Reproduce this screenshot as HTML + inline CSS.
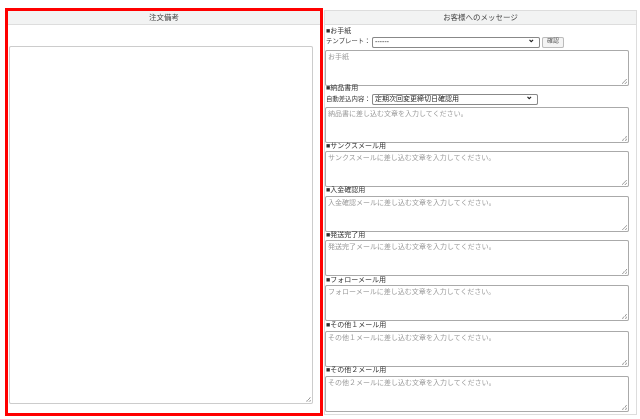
<!DOCTYPE html><html><head><meta charset="utf-8"><style>
body{margin:0;width:640px;height:419px;background:#fff;position:relative;overflow:hidden;font-family:"Liberation Sans","Noto Sans CJK JP",sans-serif;font-size:7px;color:#333}
.a{position:absolute;box-sizing:border-box;white-space:nowrap}
.hd{background:#f2f3f3;border-bottom:1px solid #ddd;text-align:center;color:#444;line-height:14px;font-size:7.5px}
.ta{border:1px solid #aaa;border-radius:2px;background:#fff;color:#999;padding:2px 2px;line-height:10px}
.lb{line-height:10px;color:#333}
.sel{border:1px solid #888;border-radius:2px;background:#fff;line-height:9px;padding-left:2px;color:#222}
.sel:after{content:"⌄";position:absolute;right:4px;top:-3px;font-size:9px;font-weight:bold}
.grip{position:absolute;right:1px;bottom:1px;width:5px;height:5px;background:linear-gradient(135deg,transparent 45%,#999 45%,#999 55%,transparent 55%,transparent 75%,#999 75%,#999 85%,transparent 85%)}
</style></head><body>
<div class="a" style="left:5px;top:8px;width:318px;height:408px;border:3px solid #f00"></div>
<div class="a hd" style="left:8px;top:11px;width:312px;height:14px">注文備考</div>
<div class="a ta" style="left:9px;top:46px;width:304px;height:358px;border-color:#ccc"><span class="grip"></span></div>

<div class="a" style="left:324px;top:10px;width:313px;height:405px;border:1px solid #ddd"></div>
<div class="a hd" style="left:325px;top:11px;width:311px;height:14px">お客様へのメッセージ</div>
<div class="a lb" style="left:326px;top:27px">■お手紙</div>
<div class="a lb" style="left:326px;top:37px;font-size:6.4px">テンプレート：</div>
<div class="a sel" style="left:372px;top:37px;width:168px;height:11px">------</div>
<div class="a" style="left:542px;top:37px;width:22px;height:11px;border:1px solid #bbb;border-radius:2px;background:#f4f4f4;font-size:6px;text-align:center;line-height:9px;color:#555">確認</div>
<div class="a ta" style="left:325px;top:50px;width:304px;height:36px">お手紙<span class="grip"></span></div>

<div class="a lb" style="left:326px;top:84px">■納品書用</div>
<div class="a lb" style="left:326px;top:95px;font-size:6.4px">自動差込内容：</div>
<div class="a sel" style="left:372px;top:94px;width:166px;height:11px">定期次回変更締切日確認用</div>
<div class="a ta" style="left:325px;top:107px;width:304px;height:36px">納品書に差し込む文章を入力してください。<span class="grip"></span></div>

<div class="a lb" style="left:326px;top:142px">■サンクスメール用</div>
<div class="a ta" style="left:325px;top:151px;width:304px;height:36px">サンクスメールに差し込む文章を入力してください。<span class="grip"></span></div>
<div class="a lb" style="left:326px;top:186px">■入金確認用</div>
<div class="a ta" style="left:325px;top:196px;width:304px;height:36px">入金確認メールに差し込む文章を入力してください。<span class="grip"></span></div>
<div class="a lb" style="left:326px;top:231px">■発送完了用</div>
<div class="a ta" style="left:325px;top:240px;width:304px;height:36px">発送完了メールに差し込む文章を入力してください。<span class="grip"></span></div>
<div class="a lb" style="left:326px;top:276px">■フォローメール用</div>
<div class="a ta" style="left:325px;top:285px;width:304px;height:36px">フォローメールに差し込む文章を入力してください。<span class="grip"></span></div>
<div class="a lb" style="left:326px;top:321px">■その他１メール用</div>
<div class="a ta" style="left:325px;top:331px;width:304px;height:36px">その他１メールに差し込む文章を入力してください。<span class="grip"></span></div>
<div class="a lb" style="left:326px;top:366px">■その他２メール用</div>
<div class="a ta" style="left:325px;top:376px;width:304px;height:36px">その他２メールに差し込む文章を入力してください。<span class="grip"></span></div>
</body></html>
